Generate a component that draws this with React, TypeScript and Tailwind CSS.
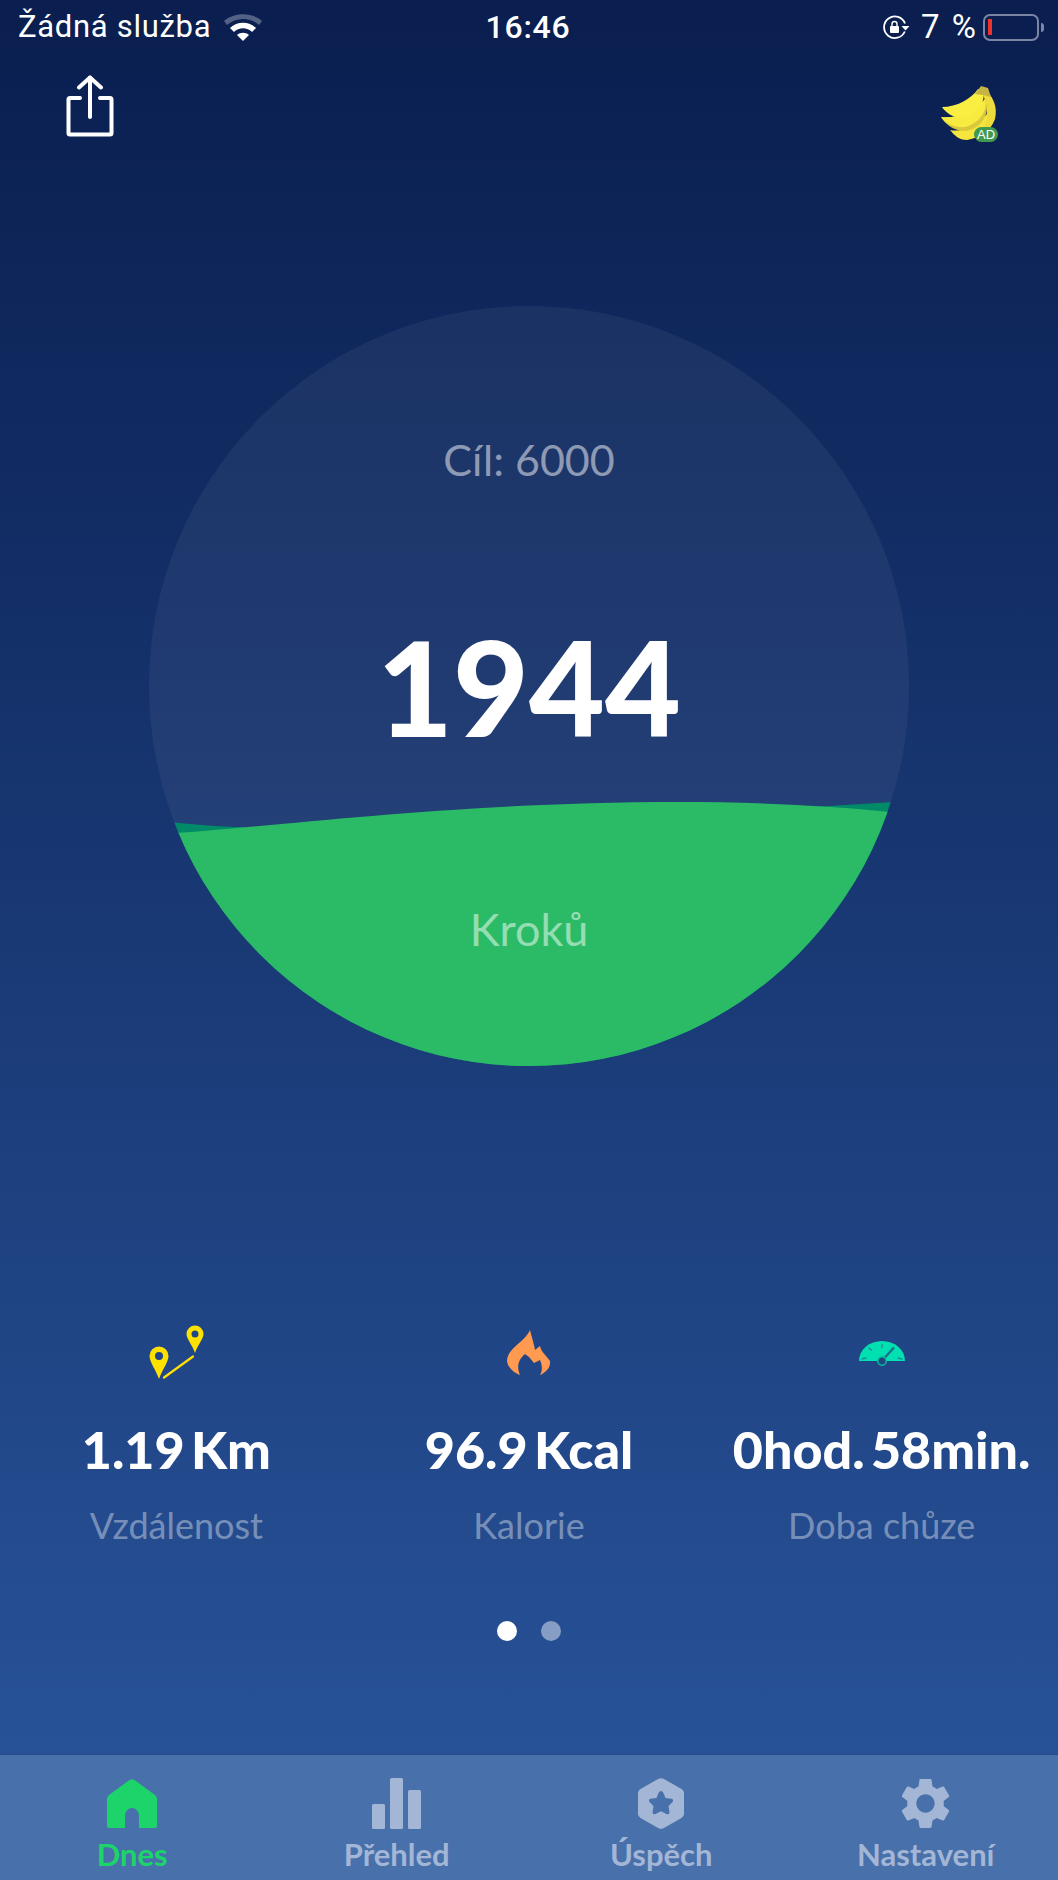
import React from "react";
import { MdSettings } from "react-icons/md";

const stats = [
  { value: "1.19 Km", label: "Vzdálenost", icon: <RouteIcon /> },
  { value: "96.9 Kcal", label: "Kalorie", icon: <FlameIcon /> },
  { value: "0hod. 58min.", label: "Doba chůze", icon: <GaugeIcon /> },
];

function WifiIcon() {
  return (
    <svg width="40" height="30" viewBox="0 0 40 30">
      <path d="M1 9 C11 0 29 0 39 9 L36 13 C27 5 13 5 4 13 Z" fill="#fff" fillOpacity="0.3" />
      <path d="M7 16 C14 9 26 9 33 16 L29 20 C24 15 16 15 11 20 Z" fill="#fff" />
      <path d="M14 23 C17 20 23 20 26 23 L20 29 Z" fill="#fff" />
    </svg>
  );
}

function RotationLockIcon() {
  return (
    <svg width="28" height="24" viewBox="0 0 28 24">
      <path d="M22.800 16.500 A10.800 10.800 0 1 1 23 8.500" fill="none" stroke="#fff" strokeWidth="1.800" />
      <path d="M19.500 11 L27.500 11 L23.500 15.500 Z" fill="#fff" />
      <rect x="8" y="11" width="9" height="7" rx="1" fill="#fff" />
      <path d="M10 11.500 V9 A2.500 2.500 0 0 1 15 9 V11.500" fill="none" stroke="#fff" strokeWidth="1.400" />
    </svg>
  );
}

function ShareIcon() {
  return (
    <svg width="48" height="62" viewBox="0 0 48 62" fill="none" stroke="#fff" strokeWidth="4" strokeLinecap="round" strokeLinejoin="round">
      <path d="M14 23 H4 Q2.500 23 2.500 24.500 V58 Q2.500 59.500 4 59.500 H44 Q45.500 59.500 45.500 58 V24.500 Q45.500 23 44 23 H34" />
      <path d="M24 42 V2.500" />
      <path d="M13 12.500 L24 2.500 L35 12.500" />
    </svg>
  );
}

function BananaIcon() {
  return (
    <div className="relative h-[56px] w-[58px]">
      <svg width="58" height="56" viewBox="0 0 58 56">
        <path d="M9 45 C22 48 38 40 50 24 C52 38 44 52 26 55 C18 55 13 50 9 45 Z" fill="#f6e53d" />
        <path d="M0 32 C16 34 34 26 44 14 C50 26 42 44 24 46 C13 46 4 39 0 32 Z" fill="#d9c83b" />
        <path d="M0 32 C16 34 34 26 44 14 C47 24 40 38 24 42 C13 43 4 38 0 32 Z" fill="#f9ea40" />
        <path d="M1 22 C16 22 30 14 37 4 L42 6 C45 16 38 27 24 32 C13 34 5 28 1 22 Z" fill="#fbee42" />
        <path d="M42 3 C52 10 57 22 54 34 C51 42 46 47 40 50 C47 38 48 22 42 10 Z" fill="#eedc3c" />
        <path d="M34 9 L40 1 L47 3 L50 12 L42 10 Z" fill="#c4b544" />
      </svg>
      <div className="absolute -bottom-[1px] right-[1px] flex h-[15px] w-[24px] items-center justify-center rounded-full bg-[#3f9a4f] font-['Liberation_Sans',sans-serif] text-[13px] leading-none text-white">
        AD
      </div>
    </div>
  );
}

function RouteIcon() {
  return (
    <svg width="60" height="56" viewBox="0 0 60 56" className="ml-[4px]">
      <path
        fillRule="evenodd"
        d="M11 54 C8 45 1.500 37 1.500 31 A9.500 9.500 0 0 1 20.500 31 C20.500 37 14 45 11 54 Z M11 27 A4 4 0 1 0 11 35 A4 4 0 0 0 11 27 Z"
        fill="#ffe100"
      />
      <path
        fillRule="evenodd"
        d="M47 28 C45 21 38.500 14 38.500 9 A8.500 8.500 0 0 1 55.500 9 C55.500 14 49 21 47 28 Z M47 5.500 A3.500 3.500 0 1 0 47 12.500 A3.500 3.500 0 0 0 47 5.500 Z"
        fill="#ffe100"
      />
      <path d="M16 52.500 L45 31.500" stroke="#ffe100" strokeWidth="2.200" strokeLinecap="round" />
    </svg>
  );
}

function FlameIcon() {
  return (
    <svg width="44" height="46" viewBox="0 0 44 46">
      <path
        d="M23 0 C25 8 27 14 28 20 L33 16 C34 22 39 25 43 31 C44 38 38 43 33 45 C36 40 35 35 33 30 L27 33 L22 27 L18 24 C12 29 9 36 13 45 C7 43 1 38 0 31 C0 18 18 12 23 0 Z"
        fill="#ff9a50"
      />
    </svg>
  );
}

function GaugeIcon() {
  return (
    <svg width="46" height="26" viewBox="0 0 46 26" className="mt-[2px]">
      <path d="M0 20 A23 20 0 0 1 46 20 H0 Z" fill="#00e0b0" />
      <g stroke="#1f8a98" strokeWidth="1.300" strokeLinecap="round">
        <path d="M23 3.500 V6.500" />
        <path d="M10 7 L12.500 9.500" />
        <path d="M3 18 L7 17" />
        <path d="M43 18 L39 17" />
      </g>
      <path d="M35 6.500 L25.500 17" stroke="#1f6f8c" strokeWidth="2.400" />
      <circle cx="23" cy="20" r="4.200" fill="#21477f" stroke="#00c5a5" strokeWidth="1.400" />
    </svg>
  );
}

function HomeIcon() {
  return (
    <svg width="50" height="50" viewBox="0 0 50 50">
      <path
        d="M22.500 1 Q25 -0.500 27.500 1 L48 16 Q50 17.500 50 20 V46.500 Q50 49 47.500 49 H32 V37 A7 8 0 0 0 18 37 V49 H2.500 Q0 49 0 46.500 V20 Q0 17.500 2 16 Z"
        fill="#1cd46a"
      />
    </svg>
  );
}

function BarsIcon() {
  return (
    <svg width="50" height="51" viewBox="0 0 50 51" fill="#a3b6d6">
      <rect x="0" y="26" width="13" height="25" rx="1.500" />
      <rect x="18" y="0" width="13" height="51" rx="1.500" />
      <rect x="36" y="12" width="13" height="39" rx="1.500" />
    </svg>
  );
}

function BadgeIcon() {
  return (
    <svg width="46" height="51" viewBox="0 0 46 51">
      <path
        fillRule="evenodd"
        fill="#a3b6d6"
        d="M20.500 0.800 Q23 -0.500 25.500 0.800 L43.500 11 Q46 12.500 46 15 V36 Q46 38.500 43.500 40 L25.500 50.200 Q23 51.500 20.500 50.200 L2.500 40 Q0 38.500 0 36 V15 Q0 12.500 2.500 11 Z M23 13 Q21.500 13 20.800 14.500 L18.500 20 L12.500 20.800 Q10 21.500 11.500 24 L15.500 28 L14.500 34 Q14.500 37 17.500 36 L23 33.200 L28.500 36 Q31.500 37 31.500 34 L30.500 28 L34.500 24 Q36 21.500 33.500 20.800 L27.500 20 L25.200 14.500 Q24.500 13 23 13 Z"
      />
    </svg>
  );
}

const tabs = [
  { label: "Dnes", active: true, icon: <HomeIcon /> },
  { label: "Přehled", active: false, icon: <BarsIcon /> },
  { label: "Úspěch", active: false, icon: <BadgeIcon /> },
  { label: "Nastavení", active: false, icon: <MdSettings size={61} color="#a3b6d6" className="-my-[5px]" /> },
];

const App: React.FC = () => {
  return (
    <div className="flex h-[1880px] w-[1058px] flex-col overflow-hidden bg-gradient-to-b from-[#0a1e4f] to-[#2a569d] font-['Lato',sans-serif] text-white">
      {/* Status bar */}
      <div className="grid h-[54px] shrink-0 grid-cols-3 items-center pl-[18px] pr-[14px] font-['Roboto',sans-serif] text-[31px]">
        <div className="flex items-center gap-[12px]">
          <span className="whitespace-nowrap tracking-[0.7px]">Žádná služba</span>
          <WifiIcon />
        </div>
        <div className="pr-[6px] text-center text-[32px] font-medium tracking-[0.8px]">16:46</div>
        <div className="flex items-center justify-end">
          <RotationLockIcon />
          <span className="ml-[11px] whitespace-nowrap text-[33px] tracking-[2px]">7 %</span>
          <div className="ml-[5px] flex h-[27px] w-[56px] items-center rounded-[7px] border-2 border-[#7a86a3] pl-[3px]">
            <div className="h-[16px] w-[4px] bg-[#f0322d]" />
          </div>
          <div className="ml-[2px] h-[9px] w-[3px] rounded-r-sm bg-[#7a86a3]" />
        </div>
      </div>

      {/* Top actions */}
      <div className="flex h-[86px] shrink-0 items-start justify-between pl-[66px] pr-[59px] pt-[21px]">
        <ShareIcon />
        <div className="mt-[10px]">
          <BananaIcon />
        </div>
      </div>

      {/* Step circle */}
      <div className="mt-[166px] flex shrink-0 justify-center">
        <div className="relative flex h-[760px] w-[760px] flex-col items-center overflow-hidden rounded-full bg-white/5">
          <svg className="absolute inset-0" width="760" height="760" viewBox="0 0 760 760">
            <path d="M0 514 C40 518 70 521 95 521 V540 H663 V501 L760 495 V760 H0 Z" fill="#008a68" />
            <path d="M0 529 C120 522 300 496 530 496 C600 496 680 499 760 508 V760 H0 Z" fill="#2bbb66" />
          </svg>
          <div className="relative mt-[124px] text-[43px] leading-[60px] text-white/50">Cíl: 6000</div>
          <div className="relative mt-[112px] text-[131px] font-black leading-[170px]">1944</div>
          <div className="relative mt-[127px] text-[45px] leading-[60px] text-white/50">Kroků</div>
        </div>
      </div>

      {/* Stats */}
      <div className="mt-[259px] grid shrink-0 grid-cols-3">
        {stats.map((s) => (
          <div key={s.label} className="flex flex-col items-center">
            <div className="flex h-[56px] items-center">{s.icon}</div>
            <div className="mt-[40px] whitespace-nowrap text-[52px] font-black leading-[56px] [word-spacing:-6px]">{s.value}</div>
            <div className="mt-[27px] text-[36px] leading-[42px] text-white/40">{s.label}</div>
          </div>
        ))}
      </div>

      {/* Pager */}
      <div className="mt-[75px] flex shrink-0 justify-center gap-[24px]">
        <div className="h-[20px] w-[20px] rounded-full bg-white" />
        <div className="h-[20px] w-[20px] rounded-full bg-white/45" />
      </div>

      {/* Tab bar */}
      <div className="mt-auto grid h-[126px] shrink-0 grid-cols-4 border-t border-[#264a85] bg-[#4870ab]">
        {tabs.map((t) => (
          <div key={t.label} className="flex flex-col items-center pt-[23px]">
            <div className="flex h-[51px] items-center justify-center">{t.icon}</div>
            <div className={`mt-[7px] text-[31px] font-bold leading-[36px] ${t.active ? "text-[#1cd46a]" : "text-[#a3b6d6]"}`}>
              {t.label}
            </div>
          </div>
        ))}
      </div>
    </div>
  );
};

export default App;
